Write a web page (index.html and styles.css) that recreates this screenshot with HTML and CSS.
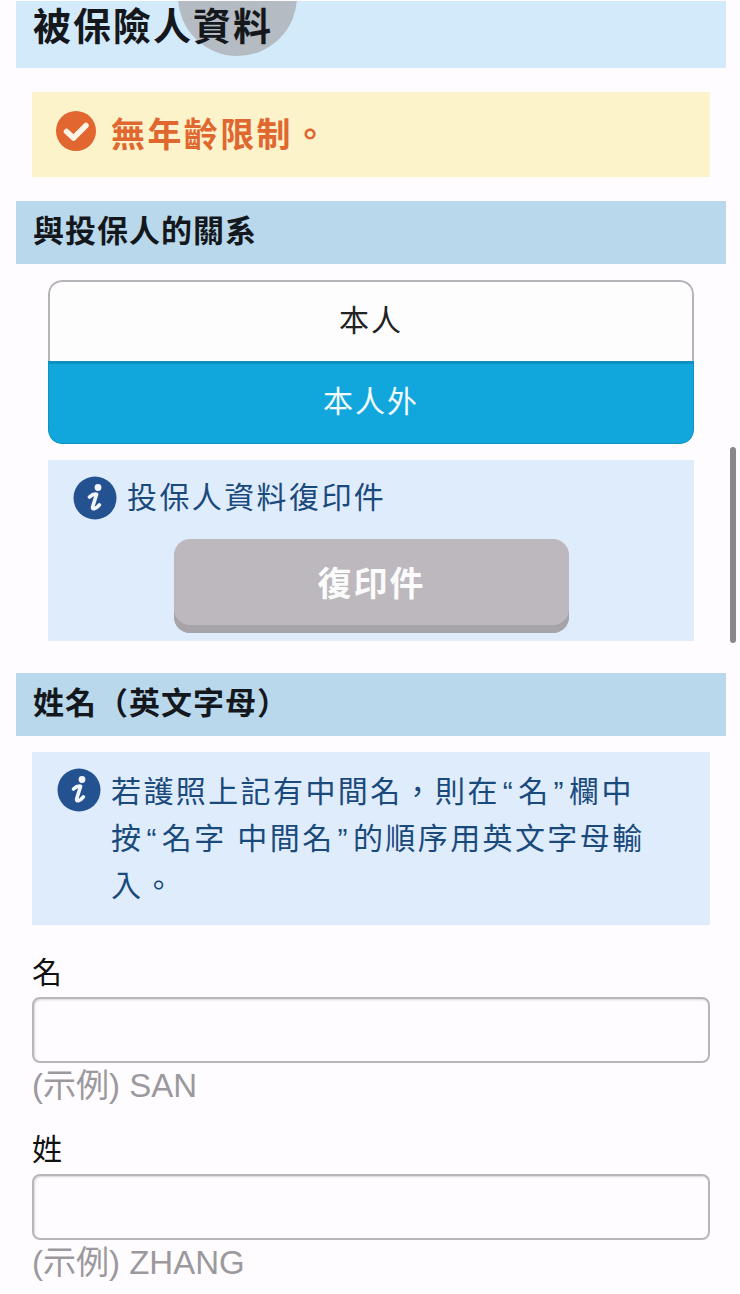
FILE: index.html
```html
<!DOCTYPE html>
<html lang="zh-Hant">
<head>
<meta charset="UTF-8">
<meta name="viewport" content="width=device-width, initial-scale=1.0">
<title>被保險人資料</title>
<link rel="stylesheet" href="styles.css">
</head>
<body>
    <div class="page">
        <h2 class="section-title section-title-top">
            <span class="tap-circle"></span>
            <span class="section-title-text">被保險人資料</span>
        </h2>

        <div class="notice">
            <svg class="notice-icon" viewBox="0 0 40 40">
                <circle cx="20" cy="20" r="20" fill="#e2662f"/>
                <path d="M10.5 20.5 L17.5 27 L30 14.5" fill="none" stroke="#fdf3e6" stroke-width="5.5" stroke-linecap="round" stroke-linejoin="round"/>
            </svg>
            <span class="notice-text">無年齡限制。</span>
        </div>

        <h3 class="section-title section-title-sub">與投保人的關系</h3>

        <div class="choice-group">
            <div class="choice">本人</div>
            <div class="choice choice-active">本人外</div>
        </div>

        <div class="info info-copy">
            <div class="info-row">
                <svg class="info-icon" viewBox="0 0 44 44">
                    <circle cx="22" cy="22" r="21.5" fill="#245291"/>
                    <circle cx="25" cy="11.5" r="3.4" fill="#f2f6fc"/>
                    <path d="M16.5 21 Q20 17.6 23.6 18.2 L19.6 31 Q19.4 33.4 21.6 32.6 Q24.2 31.6 26.4 28.8" fill="none" stroke="#f2f6fc" stroke-width="3.6" stroke-linecap="round" stroke-linejoin="round"/>
                </svg>
                <span class="info-label">投保人資料復印件</span>
            </div>
            <button class="copy-button">復印件</button>
        </div>

        <h3 class="section-title section-title-sub section-title-name">姓名（英文字母）</h3>

        <div class="info info-name">
            <div class="info-row info-row-top">
                <svg class="info-icon" viewBox="0 0 44 44">
                    <circle cx="22" cy="22" r="21.5" fill="#245291"/>
                    <circle cx="25" cy="11.5" r="3.4" fill="#f2f6fc"/>
                    <path d="M16.5 21 Q20 17.6 23.6 18.2 L19.6 31 Q19.4 33.4 21.6 32.6 Q24.2 31.6 26.4 28.8" fill="none" stroke="#f2f6fc" stroke-width="3.6" stroke-linecap="round" stroke-linejoin="round"/>
                </svg>
                <p class="info-text">
                    <span class="info-line">若護照上記有中間名，則在<span class="quote">“</span>名<span class="quote">”</span>欄中</span>
                    <span class="info-line">按<span class="quote">“</span>名字 中間名<span class="quote">”</span>的順序用英文字母輸</span>
                    <span class="info-line">入。</span>
                </p>
            </div>
        </div>

        <div class="field field-first">
            <label class="field-label">名</label>
            <input class="field-input" type="text">
            <div class="field-hint">(示例) SAN</div>
        </div>

        <div class="field">
            <label class="field-label">姓</label>
            <input class="field-input" type="text">
            <div class="field-hint">(示例) ZHANG</div>
        </div>
    </div>

    <!-- 滾動條 -->
    <div class="scrollbar"></div>
</body>
</html>
```

FILE: styles.css
```css
html, body {
    margin: 0;
    padding: 0;
}
body {
    height: 1294px;
    overflow: hidden;
    position: relative;
    background: #fefcfe;
    font-family: "Liberation Sans", "Noto Sans CJK TC", sans-serif;
}
.page {
    padding: 1px 14px 0 16px;
    border-top: 1px solid #d6d6d8;
    margin-top: -1px;
}

/* 標題欄 */
.section-title {
    margin: 0;
    padding-left: 17px;
    color: #14181d;
    font-weight: bold;
    display: flex;
    align-items: center;
    letter-spacing: 1px;
}
.section-title-top {
    position: relative;
    overflow: hidden;
    height: 67px;
    padding-bottom: 22px;
    box-sizing: border-box;
    background: #d3eafa;
    font-size: 38px;
    letter-spacing: 2px;
}
.section-title-text {
    position: relative;
}
.section-title-sub {
    height: 63px;
    padding-bottom: 8px;
    box-sizing: border-box;
    margin-top: 24px;
    background: #b9d8ec;
    font-size: 31px;
}
.section-title-name {
    margin-top: 32px;
}

/* 提示 */
.notice {
    display: flex;
    align-items: center;
    gap: 15px;
    height: 85px;
    box-sizing: border-box;
    margin: 24px 16px 0;
    padding: 0 0 8px 24px;
    background: #fdf3cb;
    color: #e0672f;
    font-size: 34px;
    font-weight: bold;
    letter-spacing: 2.4px;
}
.notice-text {
    margin-top: 4px;
}
.notice-icon {
    width: 40px;
    height: 40px;
    flex-shrink: 0;
}

/* 本人 / 本人外 */
.choice-group {
    margin: 16px 32px 0;
    border-radius: 14px;
    overflow: hidden;
}
.choice {
    height: 81px;
    box-sizing: border-box;
    display: flex;
    align-items: center;
    justify-content: center;
    padding-bottom: 8px;
    border: 2px solid #b5b3b8;
    border-bottom: none;
    border-radius: 14px 14px 0 0;
    background: #fefdfe;
    color: #222;
    font-size: 30px;
    letter-spacing: 2px;
}
.choice-active {
    height: 83px;
    padding-bottom: 10px;
    border: 1px solid #1092bf;
    border-top: 3px solid #0d90bf;
    border-radius: 0 0 14px 14px;
    background: #12a7dc;
    color: #f2fbff;
}

/* 說明框 */
.info {
    background: #dfecfb;
    color: #1a4a7c;
    font-size: 30px;
    letter-spacing: 2.4px;
}
.info-row {
    display: flex;
    align-items: center;
    gap: 10px;
}
.info-row-top {
    align-items: flex-start;
}
.info-label {
    line-height: 38px;
}
.info-icon {
    width: 44px;
    height: 44px;
    flex-shrink: 0;
}
.info-copy {
    height: 181px;
    box-sizing: border-box;
    margin: 16px 32px 0;
    padding: 16px 0 0 25px;
}
.info-name {
    height: 173px;
    box-sizing: border-box;
    margin: 16px 16px 0;
    padding: 16px 0 0 25px;
}
.info-text {
    margin: 0;
    line-height: 47px;
}
.info-line {
    display: block;
}
.quote {
    margin: 0 3px;
}
.copy-button {
    display: block;
    width: 395px;
    height: 94px;
    margin: 19px 0 0 101px;
    padding: 0 0 10px;
    border: none;
    border-radius: 16px;
    background: #bcb8bd;
    box-shadow: inset 0 -8px 0 #a6a3a9;
    color: #fbfbfb;
    font-family: inherit;
    font-size: 34px;
    font-weight: bold;
    letter-spacing: 2px;
}

/* 輸入欄 */
.field {
    margin: 0 16px;
}
.field-first {
    margin-top: 24px;
}
.field-label {
    display: block;
    color: #111;
    font-size: 30px;
    line-height: 48px;
}
.field-input {
    display: block;
    width: 100%;
    height: 66px;
    box-sizing: border-box;
    border: 2px solid #b8b6ba;
    border-radius: 8px;
    background: #fefcfe;
    box-shadow: inset 1px 1px 2px rgba(0, 0, 0, 0.15);
    outline: none;
}
.field-hint {
    color: #9b999d;
    font-size: 33px;
    line-height: 46px;
    margin-bottom: 17px;
}

/* 點擊時的圓形 */
.tap-circle {
    position: absolute;
    left: 162px;
    top: -64px;
    width: 119px;
    height: 119px;
    border-radius: 50%;
    background: radial-gradient(circle, #b4bbc2 0 74%, #a9b5bf 78%, #b3c2cd 100%);
}
.scrollbar {
    position: absolute;
    left: 730px;
    top: 447px;
    width: 6px;
    height: 196px;
    border-radius: 3px;
    background: #8b888c;
}
```
